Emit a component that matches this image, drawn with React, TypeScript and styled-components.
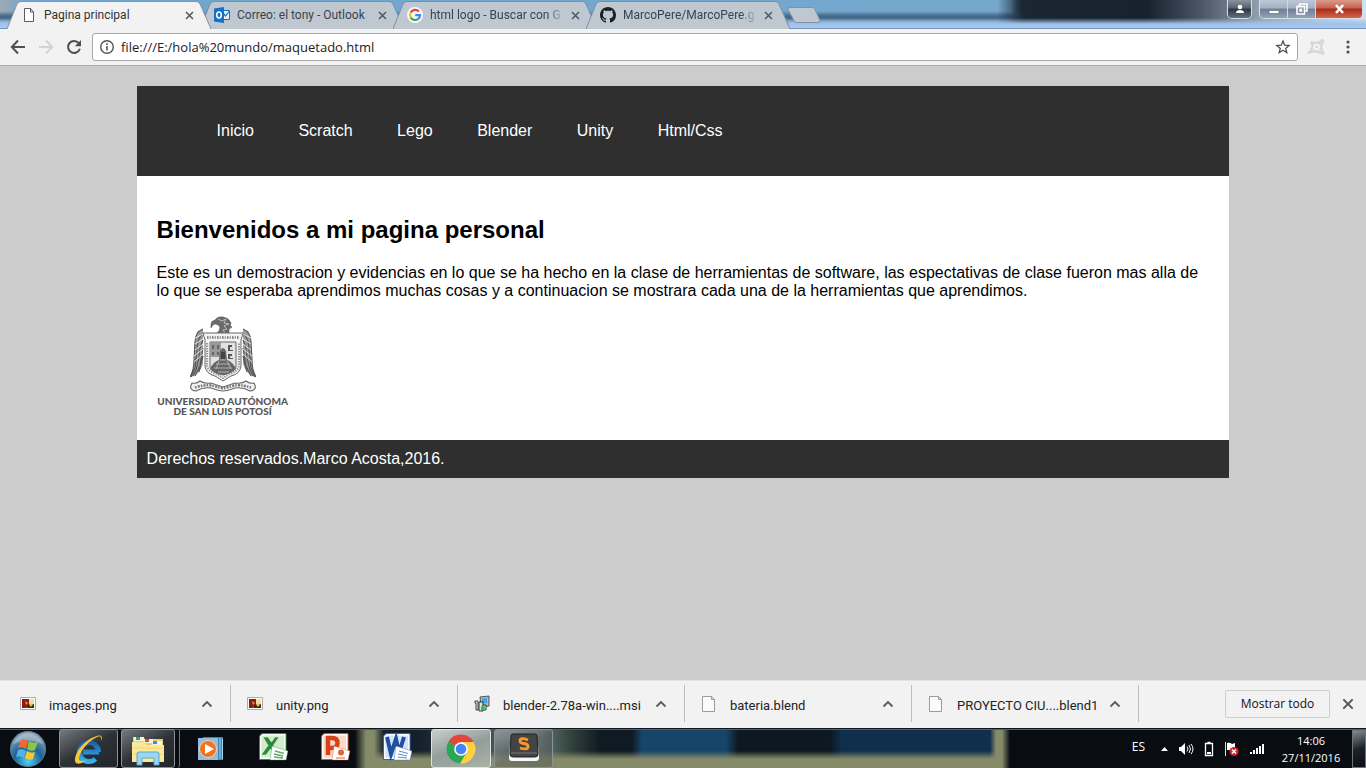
import React, { ReactNode } from 'react';
import styled, { createGlobalStyle, css } from 'styled-components';

const uiFont = '"Open Sans", "Noto Sans", sans-serif';
const labelFont = 'Roboto, "Open Sans", sans-serif';
const pageFont = '"Liberation Sans", Arial, sans-serif';

const GlobalStyle = createGlobalStyle`
  * { box-sizing: border-box; }
  body { margin: 0; }
  button, input { font: inherit; color: inherit; }
  button { padding: 0; border: 0; background: none; }
  svg { display: block; flex: none; }
`;

const Screen = styled.div`
  display: flex;
  flex-direction: column;
  min-height: 100vh;
  background: #ccc;
  font-family: ${uiFont};
  color: #222;
`;

/* ---------- window frame ---------- */

const Frame = styled.header`
  display: flex;
  align-items: flex-start;
  height: 29px;
  padding-left: 7px;
  border-bottom: 1px solid #7893ba;
  background:
    linear-gradient(180deg, transparent 18px, #a1c2e8 24px, #a9caf0 28px),
    linear-gradient(90deg, transparent 88%, #8f9cae 92%, #b9cfe5 97%, #cfe2f5 100%),
    linear-gradient(90deg, transparent 73%, #1a2733 75%, #16222e 84%, #4c5866 88%),
    linear-gradient(180deg, transparent 11px, #45698a 16px, #45698a 19px, transparent 23px),
    linear-gradient(90deg, #9fa9b4 0, #6fa5cf 2%, #76a8cd 74%, #1a2733 75%);
`;

const TabStrip = styled.nav`
  display: flex;
  padding-top: 1px;
  min-width: 0;
`;

const Tab = styled.div<{ $active?: boolean }>`
  position: relative;
  z-index: ${p => (p.$active ? 2 : 1)};
  display: flex;
  align-items: center;
  width: 193px;
  height: 28px;
  padding-left: 14px;
  font-family: ${labelFont};
  font-size: 12px;
  line-height: 16px;
  color: ${p => (p.$active ? '#333' : '#39434f')};
`;

const TabShape = styled.svg`
  position: absolute;
  left: 0;
  top: 0;
  z-index: -1;
`;

const TabTitle = styled.span<{ $fade?: boolean }>`
  flex: 1;
  min-width: 0;
  margin-left: 7px;
  white-space: nowrap;
  ${p => p.$fade && css`
    mask-image: linear-gradient(90deg, #000 86%, transparent 98%);
  `}
`;

const TabClose = styled.button`
  width: 9px;
  height: 12px;
  margin: 0 6px 0 4px;
`;

const NewTab = styled.button`
  width: 34px;
  height: 18px;
  margin: 6px 0 0 8px;
`;

const WindowButtons = styled.div`
  display: flex;
  gap: 7px;
  margin-left: auto;
  padding-right: 3px;
`;

const ButtonGroup = styled.div`
  display: flex;
  border: 1px solid #d5dfe9;
  border-top: 0;
  border-radius: 0 0 5px 5px;
  overflow: hidden;
`;

const FrameButton = styled.button<{ $kind?: 'user' | 'close' }>`
  display: flex;
  align-items: center;
  justify-content: center;
  width: ${p => (p.$kind === 'close' ? 46 : p.$kind === 'user' ? 23 : 28)}px;
  height: 18px;
  border-right: ${p => (p.$kind ? '0' : '1px solid #cfd9e4')};
  background: ${p =>
    p.$kind === 'close'
      ? 'linear-gradient(#d99a8c, #c8604e 45%, #a92b18 50%, #d2664e)'
      : p.$kind === 'user'
        ? 'linear-gradient(#8b949f, #56616d 45%, #2c3641 50%, #66717d)'
        : 'linear-gradient(#bcc8d6, #a3b1c3 45%, #6f7e94 50%, #93a3b8)'};
`;

/* ---------- toolbar ---------- */

const Toolbar = styled.div`
  display: flex;
  align-items: center;
  height: 37px;
  padding: 0 10px;
  border-bottom: 1px solid #b0b0b0;
  background: #f2f2f2;
`;

const ToolButton = styled.button<{ $gap?: number }>`
  display: flex;
  justify-content: center;
  width: 16px;
  margin-right: ${p => p.$gap ?? 0}px;
`;

const AddressBar = styled.form`
  display: flex;
  align-items: center;
  flex: 1;
  height: 28px;
  margin: 0 10px;
  padding: 0 6px;
  border: 1px solid #a9a9a9;
  border-radius: 3px;
  background: #fff;
`;

const Address = styled.input`
  flex: 1;
  min-width: 0;
  margin: 0 6px;
  padding: 0;
  border: 0;
  outline: 0;
  background: none;
  font-size: 13px;
  line-height: 20px;
  color: #222;
`;

/* ---------- page ---------- */

const Page = styled.main`
  flex: 1;
  padding: 20px 0;
  font-family: ${pageFont};
  font-size: 16px;
  line-height: 18px;
  color: #000;
`;

const Sheet = styled.div`
  width: 80%;
  margin: 0 auto;
  background: #fff;
`;

const Menu = styled.nav`
  padding: 36px 60px;
  background: #2f2f2f;
`;

const MenuList = styled.ul`
  margin: 0;
  padding: 0;
  list-style: none;
`;

const MenuItem = styled.li`
  display: inline-block;
  padding: 0 20px;
`;

const MenuLink = styled.a`
  color: #fff;
  text-decoration: none;
`;

const Content = styled.section`
  padding: 20px;
`;

const Title = styled.h2`
  margin: 20px 0;
  font-size: 24px;
  line-height: 28px;
`;

const Paragraph = styled.p`
  margin: 0 0 16px;
`;

const Emblem = styled.figure`
  display: flex;
  flex-direction: column;
  align-items: center;
  width: 132px;
  height: 104px;
  margin: 0;
`;

const EmblemName = styled.figcaption`
  font-family: Lato, sans-serif;
  font-size: 10px;
  font-weight: 900;
  line-height: 10px;
  text-align: center;
  white-space: nowrap;
  color: #555;
`;

const Footer = styled.footer`
  padding: 10px;
  background: #2f2f2f;
  color: #fff;
`;

/* ---------- downloads ---------- */

const Shelf = styled.aside`
  display: flex;
  align-items: center;
  height: 48px;
  padding: 0 12px 2px 4px;
  border-top: 1px solid #e4e4e4;
  background: #f2f2f2;
`;

const Download = styled.div`
  display: flex;
  align-items: center;
  width: 227px;
  height: 37px;
  padding: 0 17px 0 16px;
  border-right: 1px solid #bdbdbd;
`;

const FileName = styled.span`
  flex: 1;
  margin: 4px 0 0 13px;
  font-family: ${labelFont};
  font-size: 13px;
  line-height: 18px;
  white-space: nowrap;
`;

const ShowAll = styled.button`
  width: 105px;
  height: 28px;
  margin: 0 12px 0 auto;
  border: 1px solid #cfcfcf;
  border-radius: 2px;
  font-size: 12px;
  color: #111;
`;

/* ---------- taskbar ---------- */

const Taskbar = styled.footer`
  display: flex;
  align-items: center;
  height: 40px;
  border-top: 1px solid #10161c;
  box-shadow: inset 0 1px 0 #566068;
  color: #fff;
  background:
    linear-gradient(90deg, #090d12 0 355px, #858a68 366px 374px, transparent 384px 990px, #858a68 996px 1002px, #090d12 1010px),
    linear-gradient(180deg, transparent 22px, #858a68 30px),
    linear-gradient(90deg, #14202c 0 420px, #66756f 540px, #33443f 570px, #0f1a22 600px 632px, #17456a 642px 726px, #0d1820 738px 830px, #102f4c 842px);
`;

const TaskButton = styled.button<{ $look?: 'open' | 'lit'; $w?: number }>`
  display: flex;
  align-items: center;
  justify-content: center;
  width: ${p => p.$w ?? 62}px;
  height: 39px;
  ${p => p.$look && css`
    margin-left: 3px;
    border: 1px solid ${p.$look === 'lit' ? '#dfe4e2' : '#8c9296'};
    border-radius: 3px;
    background: ${p.$look === 'lit'
      ? 'linear-gradient(160deg, #c9cfcd, #939d9a 50%, #a9b3a7)'
      : 'linear-gradient(150deg, rgba(190,195,200,.6), rgba(90,95,100,.45) 50%, rgba(70,75,80,.4))'};
  `}
`;

const Stack = styled.div`
  padding-right: 4px;
  border-right: 1px solid #6f7579;
  border-radius: 3px;
`;

const Tray = styled.div`
  display: flex;
  align-items: center;
  margin-left: auto;
`;

const Language = styled.span`
  margin: 0 15px 4px 0;
  font-size: 12px;
  line-height: 17px;
`;

const TrayIcons = styled.div`
  display: flex;
  align-items: center;
  gap: 9px;
`;

const Clock = styled.time`
  width: 60px;
  margin: 0 11px 0 16px;
  font-size: 11px;
  line-height: 17px;
  text-align: center;
  white-space: nowrap;
`;

const ShowDesktop = styled.button`
  width: 14px;
  height: 38px;
  border: 1px solid #6c757c;
  background: linear-gradient(160deg, #858c92, #1c2126 50%, #0b0e12);
`;

/* ---------- drawings ---------- */

const Cross = ({ size = 9 }: { size?: number }) => (
  <svg width={size} height={size} viewBox="0 0 9 9">
    <path d="M1 1l7 7M8 1l-7 7" stroke="#53565b" strokeWidth="1.5" />
  </svg>
);

const PageIcon = () => (
  <svg width="16" height="16" viewBox="0 0 16 16">
    <path d="M3.500 1.500h6l3 3.500v9.500h-9zM9.500 1.500v3.500h3" fill="#fff" stroke="#5a5a5a" />
  </svg>
);

const OutlookIcon = () => (
  <svg width="16" height="16" viewBox="0 0 16 16">
    <path d="M8 3.500h7.500v9h-7.500" fill="#e9f2fa" stroke="#1272c4" />
    <path d="M9 6l2.500 3 4-5" fill="none" stroke="#1272c4" strokeWidth="1.200" />
    <path d="M0 1.500L10 0v16L0 14.500z" fill="#1272c4" />
    <ellipse cx="5" cy="8" rx="2.300" ry="2.900" fill="none" stroke="#fff" strokeWidth="1.500" />
  </svg>
);

const GoogleIcon = () => (
  <svg width="16" height="16" viewBox="0 0 16 16">
    <circle cx="8" cy="8" r="8" fill="#f7f8fa" />
    <g fill="none" strokeWidth="2.200">
      <path d="M11.900 4.500A5 5 0 0 0 3.700 5.500" stroke="#ea4335" />
      <path d="M3.700 5.500a5 5 0 0 0 0 5" stroke="#fbbc05" />
      <path d="M3.700 10.500a5 5 0 0 0 7.600 1.300" stroke="#34a853" />
      <path d="M11.300 11.800A5 5 0 0 0 13 8.200H8.200" stroke="#4285f4" />
    </g>
  </svg>
);

const GithubIcon = () => (
  <svg width="16" height="16" viewBox="0 0 16 16">
    <path fill="#1b1f23" d="M8 0C3.580 0 0 3.580 0 8c0 3.540 2.290 6.530 5.470 7.590.4.070.55-.17.55-.38 0-.19-.01-.82-.01-1.490-2.010.37-2.530-.49-2.690-.94-.09-.23-.48-.94-.82-1.130-.28-.15-.68-.52-.01-.53.63-.01 1.080.58 1.230.82.72 1.210 1.870.87 2.330.66.07-.52.28-.87.51-1.070-1.780-.2-3.640-.89-3.640-3.950 0-.87.31-1.590.82-2.150-.08-.2-.36-1.020.08-2.120 0 0 .67-.21 2.200.82.64-.18 1.320-.27 2-.27s1.360.09 2 .27c1.530-1.040 2.200-.82 2.200-.82.44 1.100.16 1.920.08 2.120.51.56.82 1.270.82 2.150 0 3.070-1.870 3.750-3.650 3.950.29.25.54.73.54 1.480 0 1.070-.01 1.930-.01 2.200 0 .21.15.46.55.38A8.010 8.010 0 0 0 16 8c0-4.420-3.580-8-8-8z" />
  </svg>
);

const Arrow = ({ back }: { back?: boolean }) => (
  <svg width="16" height="16" viewBox="0 0 16 16">
    <path d={back ? 'M15 8H2M8 1.500L1.800 8 8 14.500' : 'M1 8h13M8 1.500L14.200 8 8 14.500'} fill="none" stroke={back ? '#505050' : '#d2d2d2'} strokeWidth="2" />
  </svg>
);

const Reload = () => (
  <svg width="16" height="16" viewBox="0 0 16 16">
    <path d="M12.800 4.200A6 6 0 1 0 13.800 9.700" fill="none" stroke="#505050" strokeWidth="2" />
    <path d="M15 1v6.200H8.800z" fill="#505050" />
  </svg>
);

const InfoIcon = () => (
  <svg width="16" height="16" viewBox="0 0 16 16">
    <circle cx="8" cy="8" r="6.300" fill="none" stroke="#555" strokeWidth="1.400" />
    <path d="M8 7v4.500M8 4.300v1.600" stroke="#555" strokeWidth="1.600" />
  </svg>
);

const Star = () => (
  <svg width="16" height="16" viewBox="0 0 16 16">
    <path d="M8 2l1.700 4.200 4.400.3-3.400 2.900 1.100 4.300L8 11.300l-3.800 2.400 1.100-4.300-3.400-2.900 4.400-.3z" fill="none" stroke="#505050" strokeWidth="1.300" />
  </svg>
);

const Extension = () => (
  <svg width="18" height="16" viewBox="0 0 18 16">
    <path d="M4 3l4 1.500 4-1 4-2.500M4 3l1.500 4L4 11l-2 2.500 5-1 4 .5 5 2-1.500-4v-4.500L16 1" fill="#e3e3e3" stroke="#d6d6d6" strokeWidth="2" />
    <circle cx="15.500" cy="2" r="2" fill="#d9d9d9" /><circle cx="15.500" cy="13.500" r="2" fill="#d9d9d9" />
    <circle cx="9.500" cy="8" r="3" fill="#f7f7f7" /><circle cx="9.500" cy="8" r="1.300" fill="#d0d0d0" />
  </svg>
);

const Dots = () => (
  <svg width="16" height="16" viewBox="0 0 16 16" fill="#505050">
    <circle cx="8" cy="3" r="1.600" /><circle cx="8" cy="8" r="1.600" /><circle cx="8" cy="13" r="1.600" />
  </svg>
);

const Chevron = () => (
  <svg width="12" height="8" viewBox="0 0 12 8">
    <path d="M1.500 6.500L6 2l4.500 4.500" fill="none" stroke="#5a5a5a" strokeWidth="1.800" />
  </svg>
);

const Wing = () => (
  <g>
    <path d="M13 13Q5 16 5 26L4 44Q4 54 0 61Q9 60 13 48z" fill="#9c9c9c" />
    <g fill="none" stroke="#555" strokeWidth="1.100">
      <path d="M13 13Q5 16 5 26L4 44Q4 54 0 61M12 18Q7 24 7 34L5 52 1 61M13 24Q9 32 9 42L6 54 3 60M13 32Q11 42 10 50L5 60M13 40L9 56" />
      <path d="M5 22l8-4M5 28l8-5M5 34l8-6M4 40l9-7M4 46l9-8" stroke="#eee" strokeWidth=".9" />
    </g>
  </g>
);

const Crest = () => (
  <svg width="66" height="80" viewBox="0 0 66 80" role="img" aria-label="Escudo">
    <Wing />
    <g transform="translate(66 0) scale(-1 1)"><Wing /></g>
    <path d="M21 8q0-3 4-4 3-4 8-3 6 1 8 6l-1 3 2 1-3 2v5H26q4-3 4-7-2-3-5-3-2 0-4 4z" fill="#6a6a6a" stroke="#555" strokeWidth=".6" />
    <path d="M28 3l4 2 4-2-2 4 5 1-5 2 3 3-4 1 2 3" stroke="#c5c5c5" strokeWidth=".9" fill="none" />
    <path d="M13 17h40l-2 7v26q-1 8-10 10l-8 5-8-5q-9-2-10-10V24z" fill="#f4f4f4" stroke="#666" />
    <path d="M17 21.500h32" stroke="#777" strokeWidth="2.600" strokeDasharray="1.600 1.200 1 1.200" />
    <path d="M17 27v23q2 6 10 8l6 4 6-4q8-2 10-8V27" fill="none" stroke="#999" strokeWidth="2.200" strokeDasharray="1.400 1.100" />
    <path d="M20 26h26v25q-2 5-13 8-11-3-13-8z" fill="#e2e2e2" stroke="#666" />
    <path d="M20 26h11v15H20z" fill="#999" />
    <path d="M22 29h2v4h-2zM27 29h2v4h-2zM22 36h2v3h-2zM27 36h2v3h-2z" fill="#666" />
    <path d="M38 29h4v2h-2v3h3v1h-5zM38 38h4v2h-2v2h3v1h-5z" fill="#555" />
    <path d="M30 35q3-6 6 0l1 9q6 2 9 9-5 5-13 6-8-1-13-6 3-7 9-9z" fill="#666" />
    <path d="M33 36v8M30 44h6M26 48l14 0M24 52h18M28 56h11M29 45l-3 8M37 45l4 8" stroke="#b9b9b9" strokeWidth=".9" />
    <path d="M31 36h4v7h-4z" fill="#444" />
    <path d="M2 67q-4 7 4 8 7-4 15-3 8 3 12 3t12-3q8-1 15 3 8-1 4-8-5 1-8-2-4 3-11 2l-12 4-12-4q-7 1-11-2-3 3-8 2z" fill="#f1f1f1" stroke="#666" strokeWidth="1.100" />
    <path d="M5 71.500q9-3 17-2l11 3 11-3q8-1 17 2" fill="none" stroke="#777" strokeWidth="2.400" strokeDasharray="1.500 1.200 2.200 1" />
  </svg>
);

const ImageFile = () => (
  <svg width="16" height="16" viewBox="0 0 16 16">
    <path d="M.5 1.500h15v12H.5z" fill="#fff" stroke="#aaa" />
    <path d="M2 3h12v9H2z" fill="#f3d9aa" /><path d="M2 3h7v7l-3 2H2z" fill="#8b1c14" />
    <path d="M5 5l3 2-2 2z" fill="#e8962c" /><path d="M8 8l3 1 3-1v4H7z" fill="#3b2714" /><circle cx="11" cy="9" r="1.500" fill="#eac231" />
  </svg>
);

const Installer = () => (
  <svg width="16" height="18" viewBox="0 0 16 18">
    <path d="M6 2l9-1v10l-8 1z" fill="#b5b5b5" stroke="#333" strokeWidth=".8" /><path d="M8 3.500l5-.5v5L8 8.500z" fill="#39a8e8" />
    <path d="M1 6h3v9H2V8H1z" fill="#eee" stroke="#111" strokeWidth=".8" /><path d="M5 7h4v9H5z" fill="#ddd" stroke="#111" strokeWidth=".8" />
    <path d="M9 10h3v5H8z" fill="#eee" stroke="#111" strokeWidth=".8" /><circle cx="9" cy="13" r="2.200" fill="#27c36b" />
  </svg>
);

const BlankFile = () => (
  <svg width="16" height="18" viewBox="0 0 16 18">
    <path d="M1.500 1.500h9l3 3v12h-12zM10.500 1.500v3h3" fill="#fbfbfb" stroke="#9b9b9b" />
  </svg>
);

const WindowsOrb = () => (
  <svg width="38" height="38" viewBox="0 0 38 38">
    <defs>
      <radialGradient id="orb" cx=".5" cy=".85" r=".8"><stop offset="0" stopColor="#4fd0f5" /><stop offset=".5" stopColor="#1d6296" /><stop offset="1" stopColor="#8ba6ba" /></radialGradient>
    </defs>
    <circle cx="19" cy="19" r="17.500" fill="url(#orb)" stroke="#5c7f96" />
    <path d="M4 14a16 16 0 0 1 30 0q-15-7-30 0z" fill="#fff" opacity=".3" />
    <path d="M12 10q4-2 7 1l-2 8q-4-3-8-1z" fill="#ef6a2c" />
    <path d="M20 11q4 3 9 1l-3 8q-4 2-8-1z" fill="#8dc540" />
    <path d="M9 20q4-2 8 1l-2 7q-4-3-8-1z" fill="#4fb4ea" />
    <path d="M18 21q4 3 8 1l-2 7q-4 2-8-1z" fill="#fbc92f" />
  </svg>
);

const Explorer = () => (
  <svg width="34" height="34" viewBox="0 0 34 34">
    <defs><linearGradient id="ie" x2="0" y2="1"><stop stopColor="#1d5fae" /><stop offset="1" stopColor="#31b4f2" /></linearGradient></defs>
    <path d="M27 20H11M26.500 20a9.500 9.500 0 1 0-3 7" fill="none" stroke="url(#ie)" strokeWidth="5" />
    <path d="M29 10c3-7-1-8-7-5C11 9 2 22 3 29c1 5 8 2 12-1-5 2-8 1-8-2C8 18 18 8 25 5c4-2 5 1 4 5z" fill="#f5c73b" />
  </svg>
);

const Folder = () => (
  <svg width="34" height="34" viewBox="0 0 34 34">
    <path d="M2 5h10l2 2h18v23H2z" fill="#e7cf6c" /><path d="M3 5h10v4H3zM13 7h9v4h-9zM21 9h10v4H21z" fill="#f7f2d8" /><path d="M5 5h4v3H5z" fill="#2da94f" /><path d="M14 7h4v3h-4z" fill="#d64b3a" /><path d="M22 9h4v3h-4z" fill="#3c8fd6" />
    <path d="M1 10h12l3 3h17v17H1z" fill="#fae99b" /><path d="M2 16h30M2 22h30" stroke="#eed674" />
    <path d="M6 33V22q0-2 2-2h18q2 0 2 2v11h-5v-7H11v7z" fill="#9bd6f1" stroke="#5aa7d0" />
  </svg>
);

const MediaPlayer = () => (
  <svg width="28" height="28" viewBox="0 0 28 28">
    <path d="M6 2h20v23H6z" fill="#3b87bb" /><path d="M23 3v21M25.500 4v20" stroke="#a7d5ef" />
    <path d="M1 3h20v22H1z" fill="#8fbde0" /><circle cx="11" cy="14" r="8.500" fill="#ee7423" stroke="#f8d3b0" /><path d="M8 9l9 5-9 5z" fill="#fff" />
  </svg>
);

const OfficeIcon = ({ color, light, children, sheet }: { color: string; light: string; children: ReactNode; sheet: ReactNode }) => (
  <svg width="30" height="34" viewBox="0 0 30 34">
    <path d="M6 1.500h22v26H1.500V6q0-4.500 4.500-4.500z" fill={light} stroke={color} />
    <path d="M6 2.800h20.700v23.400H2.800V6q0-3 3.200-3.200z" fill="none" stroke="#fff" strokeWidth="1.200" />
    {children}
    <path d="M14 14l16 5-2 9H12z" fill="#fff" stroke={color} strokeWidth=".4" />
    {sheet}
  </svg>
);

const ChromeIcon = () => (
  <svg width="30" height="30" viewBox="0 0 30 30">
    <path d="M15 15L2.400 7.800A14.500 14.500 0 0 1 27.600 8H15z" fill="#e2473b" />
    <path d="M15 15L2.400 7.800A14.500 14.500 0 0 0 14 29.500L21 18z" fill="#2da653" />
    <path d="M15 8h12.600A14.500 14.500 0 0 1 14 29.500L21 18z" fill="#fcd042" />
    <circle cx="15" cy="15" r="6.800" fill="#fff" /><circle cx="15" cy="15" r="5.300" fill="#4285f4" />
  </svg>
);

const SublimeIcon = () => (
  <svg width="32" height="34" viewBox="0 0 32 34">
    <path d="M2 12L1 26q0 3 3 3h24q3 0 3-3l-1-14z" fill="#f7f7f7" />
    <path d="M5 2h22q2 0 2 2l1 18q0 3-3 3H5q-3 0-3-3L3 4q0-2 2-2z" fill="#444" stroke="#222" />
    <path d="M3 21h26" stroke="#777" />
    <path d="M20 8q-8-3-8 1 0 2 4 2.500t4 3q0 4-8 1.500" fill="none" stroke="#f79a2b" strokeWidth="2.800" />
  </svg>
);

/* ---------- content ---------- */

const tabs = [
  { title: 'Pagina principal', icon: <PageIcon /> },
  { title: 'Correo: el tony - Outlook', icon: <OutlookIcon /> },
  { title: 'html logo - Buscar con G', icon: <GoogleIcon />, fade: true },
  { title: 'MarcoPere/MarcoPere.g', icon: <GithubIcon />, fade: true },
];

const links = ['Inicio', 'Scratch', 'Lego', 'Blender', 'Unity', 'Html/Css'];

const downloads = [
  { name: 'images.png', icon: <ImageFile /> },
  { name: 'unity.png', icon: <ImageFile /> },
  { name: 'blender-2.78a-win....msi', icon: <Installer /> },
  { name: 'bateria.blend', icon: <BlankFile /> },
  { name: 'PROYECTO CIU....blend1', icon: <BlankFile /> },
];

export default function App() {
  return (
    <Screen>
      <GlobalStyle />
      <Frame>
        <TabStrip aria-label="Pestañas">
          {tabs.map((tab, i) => (
            <Tab key={tab.title} $active={i === 0}>
              <TabShape width="207" height="28" viewBox="0 0 207 28">
                <path d="M0 28L10 3Q11 .5 14 .5H189Q192 .5 193 3L204 28" fill={i === 0 ? '#f2f2f2' : '#bfc8d1'} stroke={i === 0 ? '#8795a6' : '#7b8ea6'} />
              </TabShape>
              {tab.icon}
              <TabTitle $fade={tab.fade}>{tab.title}</TabTitle>
              <TabClose aria-label="Cerrar pestaña"><Cross /></TabClose>
            </Tab>
          ))}
        </TabStrip>
        <NewTab aria-label="Nueva pestaña">
          <svg width="34" height="18" viewBox="0 0 34 18">
            <path d="M3 1.500h22q2 0 3 2l5 11q0 2-2 2H10q-2 0-3-2L1 3.500q0-2 2-2z" fill="#bfc8d1" stroke="#8192a5" />
          </svg>
        </NewTab>
        <WindowButtons>
          <ButtonGroup>
            <FrameButton $kind="user" aria-label="Usuario">
              <svg width="10" height="10" viewBox="0 0 10 10" fill="#fff"><circle cx="5" cy="3" r="2.300" /><path d="M1 9q0-3 4-3t4 3z" /></svg>
            </FrameButton>
          </ButtonGroup>
          <ButtonGroup>
            <FrameButton aria-label="Minimizar">
              <svg width="12" height="12" viewBox="0 0 12 12"><path d="M1 7.500h10v3H1z" fill="#fff" stroke="#59636f" strokeWidth=".6" /></svg>
            </FrameButton>
            <FrameButton aria-label="Restaurar">
              <svg width="12" height="12" viewBox="0 0 12 12" fill="none" stroke="#fff" strokeWidth="1.600"><path d="M3.500 3V1H11v7H9M1 3.500h7.500V11H1zM4 6.500h1.500V8H4z" /></svg>
            </FrameButton>
            <FrameButton $kind="close" aria-label="Cerrar">
              <svg width="11" height="10" viewBox="0 0 11 10"><path d="M2 1l7 8M9 1L2 9" stroke="#fff" strokeWidth="2.600" /></svg>
            </FrameButton>
          </ButtonGroup>
        </WindowButtons>
      </Frame>

      <Toolbar>
        <ToolButton $gap={12} aria-label="Atrás"><Arrow back /></ToolButton>
        <ToolButton $gap={12} aria-label="Adelante"><Arrow /></ToolButton>
        <ToolButton aria-label="Recargar"><Reload /></ToolButton>
        <AddressBar onSubmit={e => e.preventDefault()}>
          <InfoIcon />
          <Address aria-label="Dirección" defaultValue="file:///E:/hola%20mundo/maquetado.html" />
          <ToolButton type="button" aria-label="Favorito"><Star /></ToolButton>
        </AddressBar>
        <ToolButton $gap={16} aria-label="Extensión"><Extension /></ToolButton>
        <ToolButton aria-label="Menú"><Dots /></ToolButton>
      </Toolbar>

      <Page>
        <Sheet>
          <Menu>
            <MenuList>
              {links.map(link => (
                <React.Fragment key={link}>
                  <MenuItem><MenuLink href="#">{link}</MenuLink></MenuItem>{' '}
                </React.Fragment>
              ))}
            </MenuList>
          </Menu>
          <Content>
            <Title>Bienvenidos a mi pagina personal</Title>
            <Paragraph>
              Este es un demostracion y evidencias en lo que se ha hecho en la clase de herramientas de software, las
              espectativas de clase fueron mas alla de lo que se esperaba aprendimos muchas cosas y a continuacion se
              mostrara cada una de la herramientas que aprendimos.
            </Paragraph>
            <Emblem>
              <Crest />
              <EmblemName>UNIVERSIDAD AUTÓNOMA<br />DE SAN LUIS POTOSÍ</EmblemName>
            </Emblem>
          </Content>
          <Footer>Derechos reservados.Marco Acosta,2016.</Footer>
        </Sheet>
      </Page>

      <Shelf>
        {downloads.map(d => (
          <Download key={d.name}>
            {d.icon}
            <FileName>{d.name}</FileName>
            <button aria-label="Opciones"><Chevron /></button>
          </Download>
        ))}
        <ShowAll>Mostrar todo</ShowAll>
        <button aria-label="Cerrar descargas"><Cross size={12} /></button>
      </Shelf>

      <Taskbar>
        <TaskButton $w={56} aria-label="Inicio"><WindowsOrb /></TaskButton>
        <TaskButton $look="open" $w={59} aria-label="Internet Explorer"><Explorer /></TaskButton>
        <Stack><TaskButton $look="open" $w={54} aria-label="Explorador"><Folder /></TaskButton></Stack>
        <TaskButton aria-label="Reproductor"><MediaPlayer /></TaskButton>
        <TaskButton aria-label="Excel">
          <OfficeIcon color="#2f9145" light="#d3ecc9" sheet={<path d="M17 19l9 2.500M16 22l9 2M16 25l9 1" stroke="#61a869" strokeWidth="1.300" />}>
            <path d="M5 5h5l3.500 5L17 5h4l-5.500 8.500L21 23h-5l-3.500-6L8 23H3l7-9.500z" fill="#2b8a3c" stroke="#fff" strokeWidth=".5" />
          </OfficeIcon>
        </TaskButton>
        <TaskButton aria-label="PowerPoint">
          <OfficeIcon color="#d9502b" light="#fbd9c8" sheet={<><circle cx="21" cy="20.500" r="3" fill="#e0643c" /><path d="M16 26h9" stroke="#e0643c" /></>}>
            <path d="M8 23V6h4q5.500 0 5.500 5t-5.500 5H8" fill="none" stroke="#d6431b" strokeWidth="4.500" />
          </OfficeIcon>
        </TaskButton>
        <TaskButton aria-label="Word">
          <OfficeIcon color="#3566b5" light="#d4e4f8" sheet={<path d="M17 19l9 2.500M16 22l9 2M16 25l9 1" stroke="#5b8bd0" />}>
            <path d="M5 5l4 17 5-15 3 14 5-16" fill="none" stroke="#1f4fa0" strokeWidth="4" />
          </OfficeIcon>
        </TaskButton>
        <TaskButton $look="lit" $w={60} aria-label="Chrome"><ChromeIcon /></TaskButton>
        <TaskButton $look="open" $w={59} aria-label="Sublime Text"><SublimeIcon /></TaskButton>
        <Tray>
          <Language>ES</Language>
          <TrayIcons>
            <svg width="9" height="6" viewBox="0 0 9 6"><path d="M1 5l3.500-4L8 5z" fill="#fff" /></svg>
            <svg width="16" height="14" viewBox="0 0 16 14"><path d="M1 5h2l4-4v12L3 9H1z" fill="#fff" /><path d="M9 4.500q2 2.500 0 5M11 3q3 4 0 8M13 2q4 5 0 10" fill="none" stroke="#fff" /></svg>
            <svg width="12" height="16" viewBox="0 0 12 16"><path d="M2.500 2.500h7v12h-7zM4.500 1.500h3" fill="none" stroke="#fff" strokeWidth="1.300" /><path d="M4 11h4v2H4z" fill="#fff" /></svg>
            <svg width="16" height="16" viewBox="0 0 16 16"><path d="M1.500 1v14" stroke="#ddd" /><path d="M3 2q3-1 5 1l3-1v7H3z" fill="#fff" /><circle cx="10" cy="10.500" r="4.500" fill="#d5202a" /><path d="M8 8.500l4 4M12 8.500l-4 4" stroke="#fff" strokeWidth="1.500" /></svg>
            <svg width="16" height="14" viewBox="0 0 16 14"><path d="M1 10h2v2H1zM4 8h2v4H4zM7 6h2v6H7zM10 4h2v8h-2zM13 2h2v10h-2z" fill="#fff" /></svg>
          </TrayIcons>
          <Clock>14:06<br />27/11/2016</Clock>
          <ShowDesktop aria-label="Mostrar escritorio" />
        </Tray>
      </Taskbar>
    </Screen>
  );
}
